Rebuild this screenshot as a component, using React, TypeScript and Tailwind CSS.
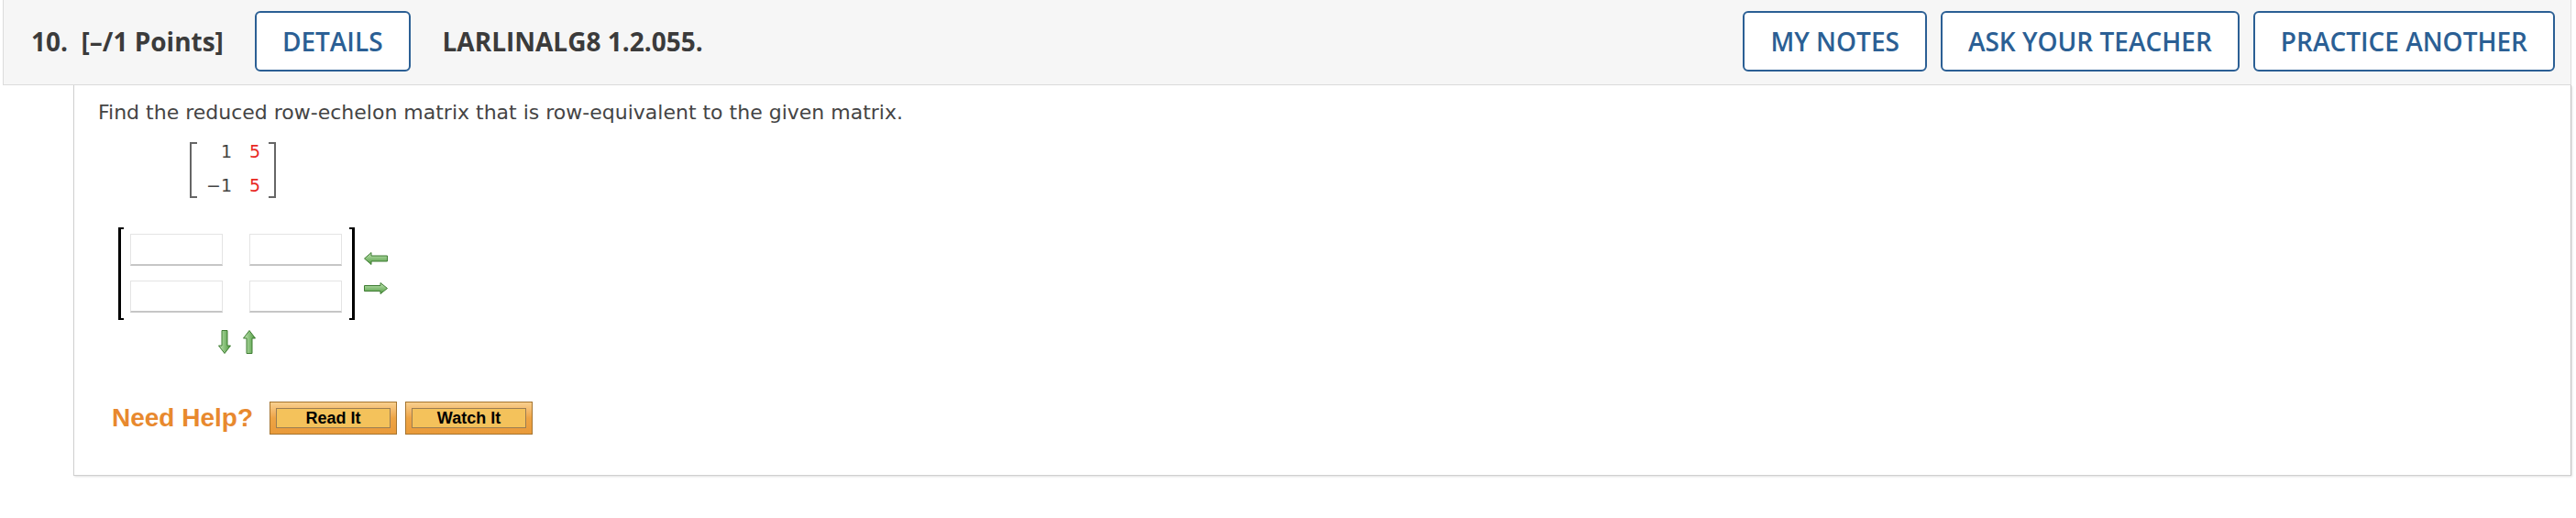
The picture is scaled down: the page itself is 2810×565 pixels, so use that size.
import React from 'react';

const blueBtn =
  'h-[66px] px-[28px] flex items-center rounded-[6px] border-2 border-[#2b5f94] text-[#2b5f94] text-[28px] font-semibold bg-white';

const ArrowLeft = () => (
  <svg width="26" height="14" viewBox="0 0 26 14">
    <defs>
      <linearGradient id="ga" x1="0" y1="0" x2="0" y2="1">
        <stop offset="0" stopColor="#c3e6b6" />
        <stop offset="1" stopColor="#4e9a3f" />
      </linearGradient>
    </defs>
    <path d="M0.5 7 L8 0.5 L8 4 L25.5 4 L25.5 10 L8 10 L8 13.5 Z" fill="url(#ga)" stroke="#3f7c33" strokeWidth="1" />
  </svg>
);

const ArrowRight = () => (
  <svg width="26" height="13" viewBox="0 0 26 13">
    <defs>
      <linearGradient id="gb" x1="0" y1="0" x2="0" y2="1">
        <stop offset="0" stopColor="#c3e6b6" />
        <stop offset="1" stopColor="#4e9a3f" />
      </linearGradient>
    </defs>
    <path d="M25.5 6.5 L18 0.5 L18 3.5 L0.5 3.5 L0.5 9.5 L18 9.5 L18 12.5 Z" fill="url(#gb)" stroke="#3f7c33" strokeWidth="1" />
  </svg>
);

const ArrowDown = () => (
  <svg width="14" height="26" viewBox="0 0 14 26">
    <defs>
      <linearGradient id="gc" x1="0" y1="0" x2="1" y2="0">
        <stop offset="0" stopColor="#c3e6b6" />
        <stop offset="1" stopColor="#4e9a3f" />
      </linearGradient>
    </defs>
    <path d="M7 25.5 L0.5 17 L4 17 L4 0.5 L10 0.5 L10 17 L13.5 17 Z" fill="url(#gc)" stroke="#3f7c33" strokeWidth="1" />
  </svg>
);

const ArrowUp = () => (
  <svg width="14" height="26" viewBox="0 0 14 26">
    <defs>
      <linearGradient id="gd" x1="0" y1="0" x2="1" y2="0">
        <stop offset="0" stopColor="#c3e6b6" />
        <stop offset="1" stopColor="#4e9a3f" />
      </linearGradient>
    </defs>
    <path d="M7 0.5 L0.5 9 L4 9 L4 25.5 L10 25.5 L10 9 L13.5 9 Z" fill="url(#gd)" stroke="#3f7c33" strokeWidth="1" />
  </svg>
);

const Cell = () => (
  <div className="w-[101px] h-[35px] bg-white border border-[#e4e4e4] border-b-2 border-b-[#c6c6c6]" />
);

const HelpButton = ({ label }: { label: string }) => (
  <div className="w-[139px] h-[36px] p-[6px] border border-[#a5742f] bg-gradient-to-b from-[#f8cf8e] via-[#eea444] to-[#e99a3a]">
    <div className="h-full flex items-center justify-center border border-[#9b7d53] bg-[#f4c25b] text-[18px] font-bold text-black leading-none">
      {label}
    </div>
  </div>
);

const App: React.FC = () => {
  return (
    <div className="w-[2810px] h-[565px] bg-white overflow-hidden" style={{ fontFamily: '"Open Sans", sans-serif' }}>
      {/* Header */}
      <div className="ml-[3px] mr-[5px] h-[93px] pl-[30px] pr-[17px] pb-[3px] flex items-center bg-[#f6f6f6] border-x border-b border-[#dcdcdc]">
        <span className="text-[28px] font-bold text-[#3b3b3b] whitespace-pre">10.  [–/1 Points]</span>
        <div className={`${blueBtn} ml-[34px]`}>DETAILS</div>
        <span className="ml-[35px] text-[28px] font-bold text-[#3b3b3b]">LARLINALG8 1.2.055.</span>
        <div className="ml-auto flex gap-[15px]">
          <div className={blueBtn}>MY NOTES</div>
          <div className={blueBtn}>ASK YOUR TEACHER</div>
          <div className={blueBtn}>PRACTICE ANOTHER</div>
        </div>
      </div>

      {/* Question body */}
      <div className="ml-[80px] mr-[5px] h-[426px] pl-[26px] border-x border-b border-[#cfcfcf] border-r-[#c4c4c4] shadow-[1px_1px_2px_rgba(0,0,0,0.12)]">
        <p className="pt-[17px] text-[22px] leading-[26px] text-[#444]" style={{ fontFamily: '"DejaVu Sans", sans-serif' }}>
          Find the reduced row-echelon matrix that is row-equivalent to the given matrix.
        </p>

        {/* Given matrix */}
        <div className="mt-[19px] ml-[100px] flex items-start" style={{ fontFamily: '"DejaVu Sans", sans-serif' }}>
          <div className="w-[8px] h-[61px] border-l-2 border-y-2 border-[#666]" />
          <div className="ml-[10px] grid grid-cols-[auto_auto] gap-x-[19px] gap-y-[17px] text-[19px] leading-[20px] text-right">
            <span className="text-[#444]">1</span>
            <span className="text-[#e8281f]">5</span>
            <span className="text-[#444]">−1</span>
            <span className="text-[#e8281f]">5</span>
          </div>
          <div className="ml-[9px] w-[8px] h-[61px] border-r-2 border-y-2 border-[#666]" />
        </div>

        {/* Answer matrix */}
        <div className="mt-[32px] ml-[22px] flex items-start">
          <div className="w-[6px] h-[101px] border-l-[3px] border-y-2 border-black" />
          <div className="ml-[7px] pt-[7px] grid grid-cols-2 gap-x-[29px] gap-y-[16px]">
            <Cell />
            <Cell />
            <Cell />
            <Cell />
          </div>
          <div className="ml-[8px] w-[6px] h-[101px] border-r-[3px] border-y-2 border-black" />
          <div className="ml-[10px] pt-[27px] flex flex-col gap-[19px]">
            <ArrowLeft />
            <ArrowRight />
          </div>
        </div>

        <div className="mt-[11px] ml-[131px] flex gap-[13px]">
          <ArrowDown />
          <ArrowUp />
        </div>

        {/* Need help */}
        <div className="mt-[49px] ml-[15px] flex items-center" style={{ fontFamily: '"Liberation Sans", Arial, sans-serif' }}>
          <span className="text-[28px] font-bold text-[#e8892e]">Need Help?</span>
          <div className="ml-[18px] flex gap-[9px]">
            <HelpButton label="Read It" />
            <HelpButton label="Watch It" />
          </div>
        </div>
      </div>
    </div>
  );
};

export default App;
